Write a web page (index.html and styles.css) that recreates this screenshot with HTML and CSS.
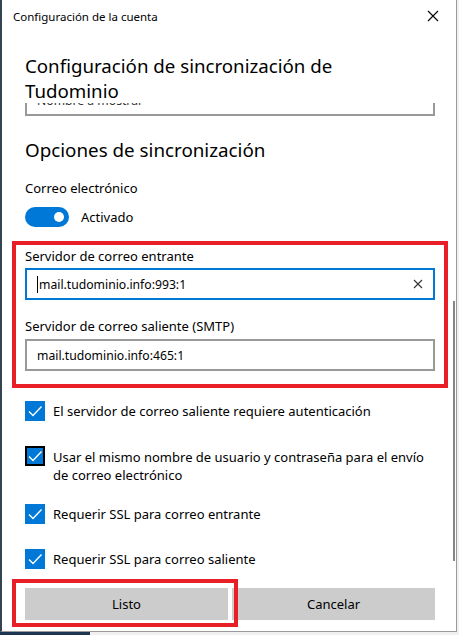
FILE: index.html
```html
<!DOCTYPE html>
<html lang="es">
<head>
    <meta charset="UTF-8">
    <meta name="viewport" content="width=device-width, initial-scale=1.0">
    <title>Configuración de la cuenta</title>
    <link rel="stylesheet" href="styles.css">
</head>
<body>
    <div class="window">
        <div class="titlebar">
            <span class="titlebar-text">Configuración de la cuenta</span>
            <svg class="close-icon" width="12" height="12" viewBox="0 0 12 12">
                <path d="M1 1 L11 11 M11 1 L1 11" stroke="#000" stroke-width="1.1" fill="none"/>
            </svg>
        </div>

        <h1 class="page-title">Configuración de sincronización de Tudominio</h1>

        <div class="scroll-area">
            <div class="content">
                <div class="textbox textbox-clipped">Nombre a mostrar</div>

                <h2 class="section-title">Opciones de sincronización</h2>

                <div class="field-label">Correo electrónico</div>
                <div class="toggle-row">
                    <span class="toggle"><span class="toggle-knob"></span></span>
                    <span>Activado</span>
                </div>

                <div class="highlight-box">
                    <div class="field-label">Servidor de correo entrante</div>
                    <div class="textbox textbox-focused">
                        <span class="caret"></span>
                        <span class="textbox-value">mail.tudominio.info:993:1</span>
                        <svg class="clear-icon" width="10" height="10" viewBox="0 0 10 10">
                            <path d="M1 1 L9 9 M9 1 L1 9" stroke="#333" stroke-width="1.1" fill="none"/>
                        </svg>
                    </div>
                    <div class="field-label label-spaced">Servidor de correo saliente (SMTP)</div>
                    <div class="textbox">
                        <span class="textbox-value">mail.tudominio.info:465:1</span>
                    </div>
                </div>

                <div class="check-list">
                    <div class="check-row">
                        <span class="checkbox"><svg width="20" height="20" viewBox="0 0 20 20"><path d="M4 10.5 L8 14.5 L16.5 5.5" stroke="#fff" stroke-width="1.4" fill="none"/></svg></span>
                        <span class="check-text">El servidor de correo saliente requiere autenticación</span>
                    </div>
                    <div class="check-row check-row-multi">
                        <span class="checkbox checkbox-focused"><svg width="20" height="20" viewBox="0 0 20 20"><path d="M4 10.5 L8 14.5 L16.5 5.5" stroke="#fff" stroke-width="1.4" fill="none"/></svg></span>
                        <span class="check-text">Usar el mismo nombre de usuario y contraseña para el envío de correo electrónico</span>
                    </div>
                    <div class="check-row">
                        <span class="checkbox"><svg width="20" height="20" viewBox="0 0 20 20"><path d="M4 10.5 L8 14.5 L16.5 5.5" stroke="#fff" stroke-width="1.4" fill="none"/></svg></span>
                        <span class="check-text">Requerir SSL para correo entrante</span>
                    </div>
                    <div class="check-row">
                        <span class="checkbox"><svg width="20" height="20" viewBox="0 0 20 20"><path d="M4 10.5 L8 14.5 L16.5 5.5" stroke="#fff" stroke-width="1.4" fill="none"/></svg></span>
                        <span class="check-text">Requerir SSL para correo saliente</span>
                    </div>
                </div>
            </div>
            <div class="scroll-thumb"></div>
        </div>

        <div class="footer">
            <button class="btn">Listo</button>
            <button class="btn">Cancelar</button>
            <div class="btn-highlight"></div>
        </div>
    </div>
    <div class="desktop-strip"></div>
</body>
</html>
```

FILE: styles.css
```css
body {
    margin: 0;
    background-color: #f0f0f0;
    font-family: "Noto Sans", "Open Sans", Arial, sans-serif;
    color: #000;
    overflow: hidden;
}
.window {
    width: 454px;
    height: 631px;
    background-color: #ffffff;
    border-left: 2px solid #34444f;
    border-right: 1px solid #9a9a9a;
    border-bottom: 1px solid #9a9a9a;
    display: flex;
    flex-direction: column;
    position: relative;
}
.titlebar {
    height: 32px;
    display: flex;
    align-items: center;
    justify-content: space-between;
    padding: 0 17px 0 11px;
}
.titlebar-text {
    font-size: 11.5px;
}
.close-icon {
    display: block;
}
.page-title {
    margin: 21px 0 0 23px;
    font-size: 18.7px;
    font-weight: 400;
    line-height: 25px;
    width: 320px;
    position: relative;
    z-index: 1;
}
.scroll-area {
    flex: 1;
    overflow: hidden;
    position: relative;
}
.content {
    padding: 0 21px 0 23px;
}
.textbox {
    height: 32px;
    box-sizing: border-box;
    border: 2px solid #999999;
    padding: 0 10px;
    display: flex;
    align-items: center;
    font-size: 12.2px;
}
.textbox-clipped {
    margin-top: -19px;
    color: #333;
}
.textbox-focused {
    border-color: #0078d7;
}
.caret {
    width: 1px;
    height: 17px;
    background-color: #000;
    margin-right: 1px;
}
.textbox-value {
    flex: 1;
}
.section-title {
    margin: 21px 0 0;
    font-size: 18.8px;
    font-weight: 400;
    line-height: 26px;
}
.field-label {
    font-size: 13px;
    line-height: 20px;
    margin-top: 15px;
}
.toggle-row {
    display: flex;
    align-items: center;
    gap: 12px;
    margin-top: 9px;
    font-size: 13px;
}
.toggle {
    width: 44px;
    height: 20px;
    border-radius: 10px;
    background-color: #0078d7;
    position: relative;
}
.toggle-knob {
    position: absolute;
    top: 5px;
    right: 5px;
    width: 10px;
    height: 10px;
    border-radius: 50%;
    background-color: #fff;
}
.highlight-box {
    margin: 14px -13px 0;
    border: 4px solid #e81f27;
    padding: 1px 9px 13px;
}
.highlight-box .field-label {
    margin-top: 0;
    margin-bottom: 2px;
}
.highlight-box .label-spaced {
    margin-top: 16px;
    margin-bottom: 3px;
}
.check-list {
    margin-top: 13px;
    display: flex;
    flex-direction: column;
    gap: 25px;
}
.check-row {
    display: flex;
    align-items: flex-start;
    gap: 8px;
    font-size: 13px;
    line-height: 20px;
}
.check-row-multi {
    line-height: 18px;
    margin-bottom: -5px;
}
.check-row-multi .check-text {
    padding-top: 2px;
}
.checkbox {
    width: 20px;
    height: 20px;
    flex-shrink: 0;
    background-color: #0078d7;
    box-sizing: border-box;
}
.checkbox svg {
    display: block;
}
.checkbox-focused {
    border: 2px solid #000;
}
.checkbox-focused svg {
    margin: -2px;
}
.scroll-thumb {
    position: absolute;
    right: 1px;
    top: 198px;
    width: 2px;
    height: 260px;
    background-color: #858585;
}
.footer {
    display: flex;
    gap: 4px;
    padding: 0 21px 11px 23px;
    position: relative;
}
.btn {
    flex: 1;
    height: 32px;
    border: none;
    background-color: #cccccc;
    font-family: inherit;
    font-size: 13px;
    color: #000;
    padding: 0;
}
.btn-highlight {
    position: absolute;
    left: 10px;
    top: -9px;
    width: 218px;
    height: 40px;
    border: 4px solid #e81f27;
}
.desktop-strip {
    height: 3px;
    width: 90px;
    background-color: #1c3550;
}
```
